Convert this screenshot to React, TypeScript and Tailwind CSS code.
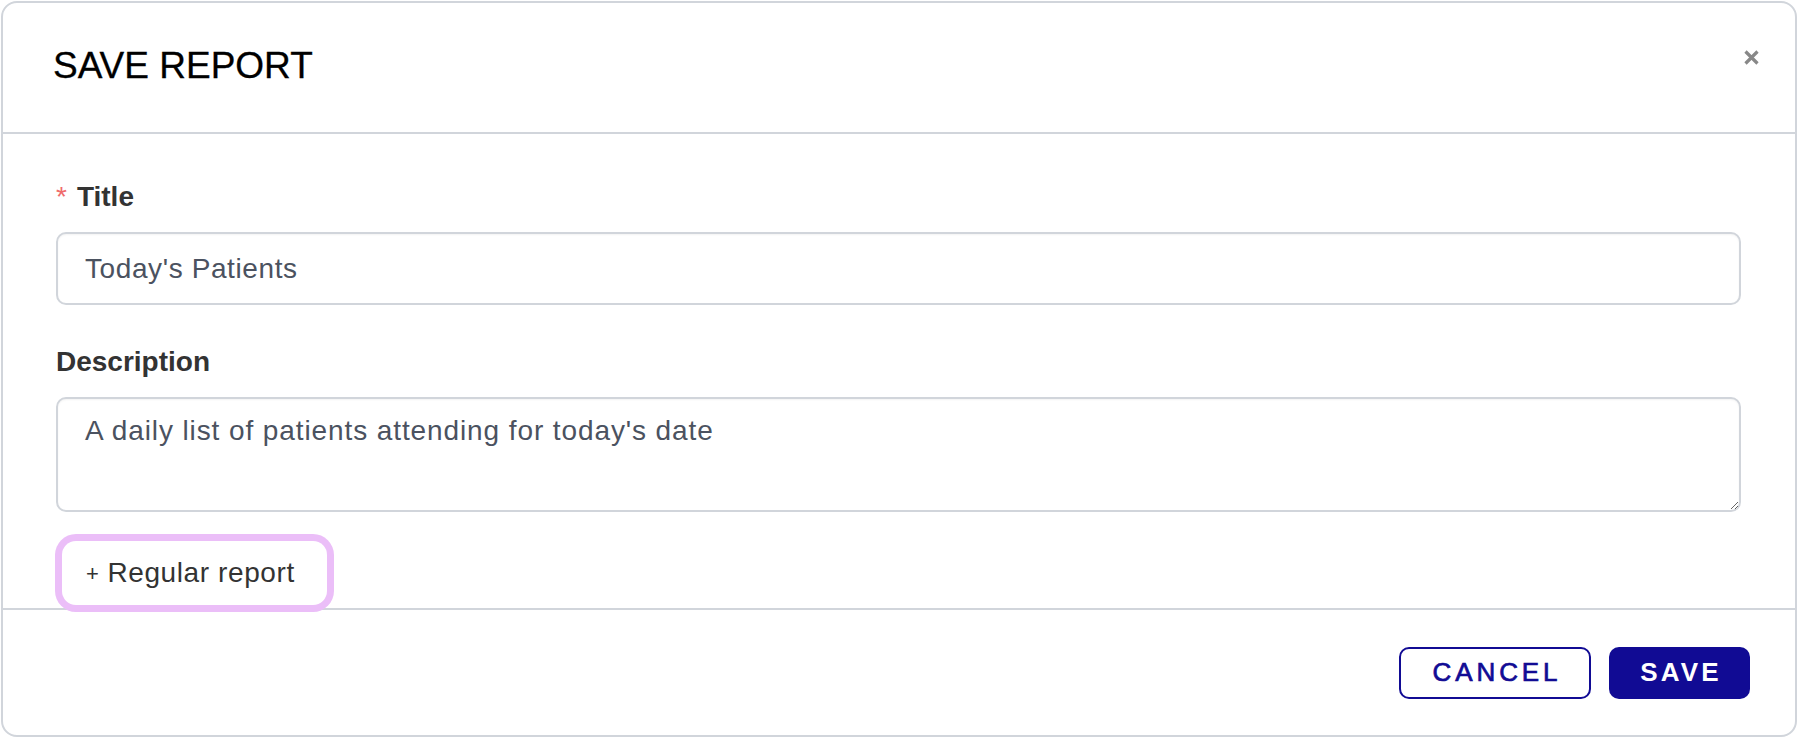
import React from "react";

export default function App() {
  return (
    <div className="p-px bg-white font-['Liberation_Sans',Arial,sans-serif]">
      <div className="w-[1796px] h-[736px] border-2 border-[#d1d5db] rounded-2xl bg-white flex flex-col overflow-hidden">
        {/* Header */}
        <div className="h-[131px] shrink-0 border-b-2 border-[#d1d5db] flex justify-between items-start pl-[50px] pr-[36px] pt-[44px]">
          <h2 className="text-[37px] leading-[37px] text-black font-normal [-webkit-text-stroke:0.3px_#000]">SAVE REPORT</h2>
          <button className="mt-[3px] w-[15px] h-[15px] flex items-center justify-center text-[#888888]" aria-label="Close">
            <svg width="15" height="15" viewBox="0 0 15 15" fill="none">
              <path d="M1.5 1.5 L13.5 13.5 M13.5 1.5 L1.5 13.5" stroke="currentColor" strokeWidth="3.2" strokeLinecap="butt" />
            </svg>
          </button>
        </div>

        {/* Body */}
        <div className="flex-1 flex flex-col items-start pl-[53px] pr-[54px] pt-[47px]">
          <label className="text-[28px] leading-[32px] font-bold text-[#333333] flex items-start">
            <span className="text-[#ef6b6b] font-normal mr-[10px]">*</span>
            <span>Title</span>
          </label>
          <input
            defaultValue="Today's Patients"
            className="mt-[19px] w-full h-[73px] border-2 border-[#d1d5db] rounded-[10px] pl-[27px] text-[28px] tracking-[0.6px] text-[#4b5260] bg-white shadow-[inset_0_1px_2px_rgba(0,0,0,0.05)] outline-none"
          />

          <label className="mt-[41px] text-[28px] leading-[32px] font-bold text-[#333333]">Description</label>
          <textarea
            defaultValue="A daily list of patients attending for today's date"
            className="mt-[19px] w-full h-[115px] border-2 border-[#d1d5db] rounded-[10px] pl-[27px] pt-[14px] text-[28px] leading-[36px] tracking-[0.9px] text-[#4b5260] bg-white shadow-[inset_0_1px_2px_rgba(0,0,0,0.05)] outline-none"
          />

          <button className="relative z-10 mt-[29px] ml-[6px] w-[265px] h-[64px] rounded-[14px] bg-white ring-[7px] ring-[#ebbef8] pl-[24px] flex items-center text-[#333333] text-[28px] tracking-[0.6px]">
            <span className="text-[22px] mr-[8px]">+</span>
            <span>Regular report</span>
          </button>
        </div>

        {/* Footer */}
        <div className="h-[127px] shrink-0 border-t-2 border-[#d1d5db] flex items-center justify-end gap-[18px] pr-[45px]">
          <button className="w-[192px] h-[52px] border-2 border-[#110b94] rounded-[10px] text-[#110b94] text-[26px] tracking-[0.15em] [-webkit-text-stroke:0.7px_#110b94] flex items-center justify-center pl-[4px]">
            CANCEL
          </button>
          <button className="w-[141px] h-[52px] bg-[#110b94] rounded-[10px] text-white text-[26px] font-bold tracking-[0.12em] flex items-center justify-center pl-[3px]">
            SAVE
          </button>
        </div>
      </div>
    </div>
  );
}
